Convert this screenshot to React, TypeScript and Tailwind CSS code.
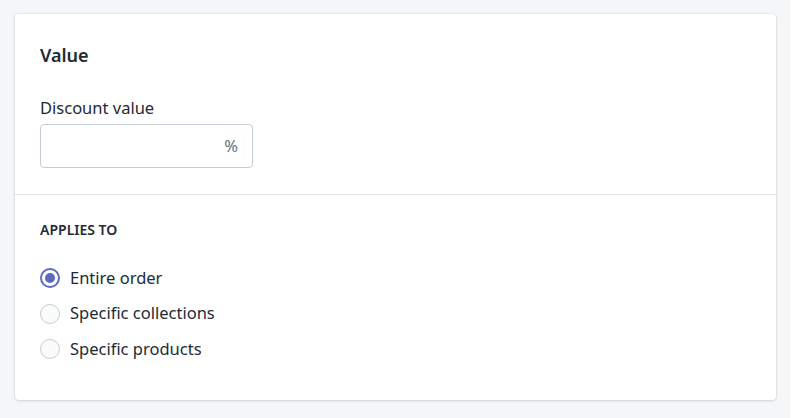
import { useState } from "react";

const OPTIONS = ["Entire order", "Specific collections", "Specific products"];

export default function App() {
  const [applies, setApplies] = useState("Entire order");

  return (
    <div className="flex h-[418px] w-[800px] bg-white font-['Segoe_UI','Noto_Sans',sans-serif] text-[#212b36]">
      <div className="w-[790px] bg-[#f4f6f8] pl-[15px] pr-[14px] pt-[14px]">
        <div className="h-[386px] rounded-[4px] bg-white shadow-[0_0_0_1px_rgba(63,63,68,0.05),0_1px_3px_0_rgba(63,63,68,0.15)]">
          {/* value section */}
          <div className="h-[181px] border-b border-[#dfe3e8] px-[25px] pt-[28px]">
            <h2 className="text-[18px] font-semibold leading-[26px]">Value</h2>
            <label className="mt-[29px] block text-[16.5px] leading-[22px]">Discount value</label>
            <div className="mt-[5px] flex h-[44px] w-[213px] items-center justify-end rounded-[4px] border border-[#c4cdd5] px-[14px] text-[16.5px] text-[#637381]">
              %
            </div>
          </div>

          {/* applies to */}
          <div className="px-[25px] pt-[25px]">
            <h3 className="text-[14px] font-semibold uppercase leading-[20px]">Applies to</h3>
            <div className="mt-[27px] flex flex-col gap-[13.5px]">
              {OPTIONS.map((o) => (
                <label key={o} className="flex h-[22px] cursor-pointer items-center gap-[10px] text-[16.5px]" onClick={() => setApplies(o)}>
                  <span className={applies === o ? "flex h-[20px] w-[20px] items-center justify-center rounded-full border-2 border-[#5c6ac4] bg-white" : "flex h-[20px] w-[20px] items-center justify-center rounded-full border border-[#c4cdd5] bg-[#fafbfb]"}>
                    {applies === o && <span className="h-[10px] w-[10px] rounded-full bg-[#5c6ac4]" />}
                  </span>
                  {o}
                </label>
              ))}
            </div>
          </div>
        </div>
      </div>
    </div>
  );
}
